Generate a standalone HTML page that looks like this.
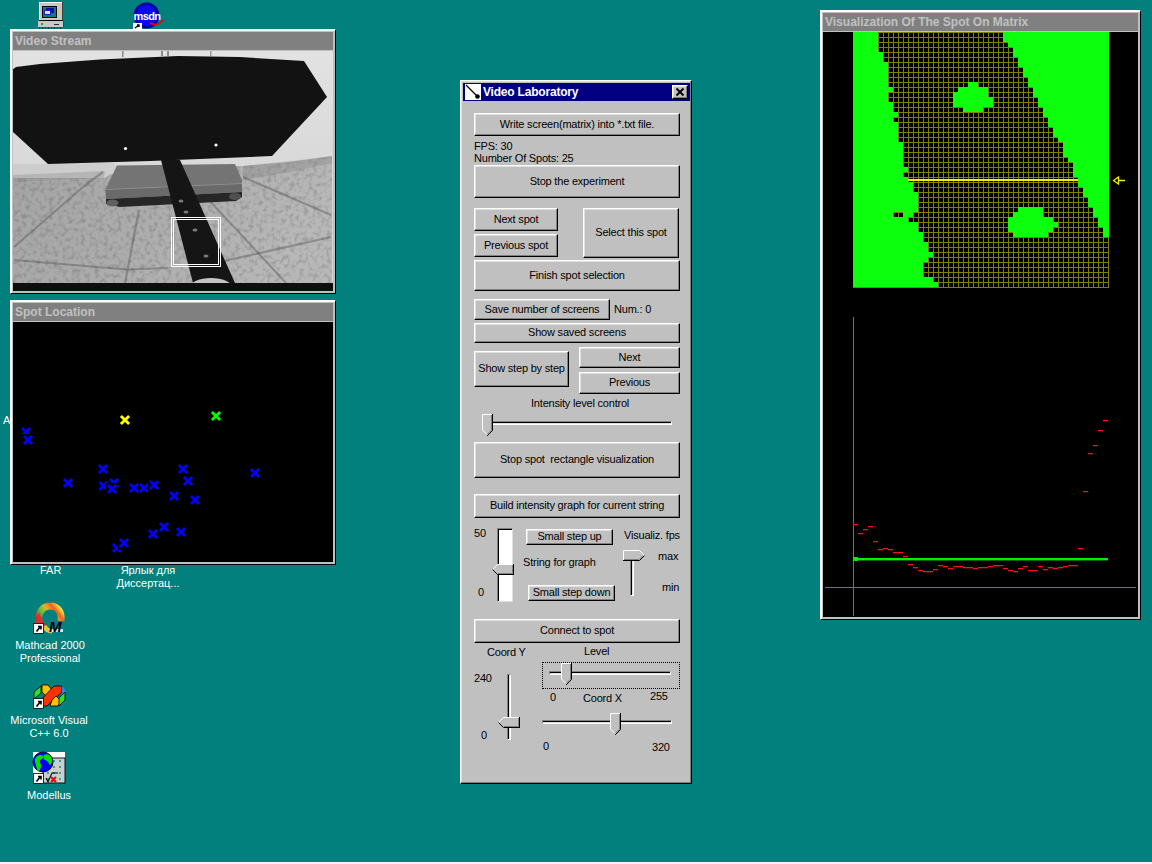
<!DOCTYPE html>
<html><head><meta charset="utf-8">
<style>
*{box-sizing:border-box;margin:0;padding:0}
html,body{width:1152px;height:864px;overflow:hidden}
body{background:#01807d;position:relative;font-family:"Liberation Sans",sans-serif;font-size:11px;color:#000}
.a{position:absolute}
.win{position:absolute;background:#c0c0c0;border-top:1px solid #fff;border-left:1px solid #fff;border-right:1px solid #000;border-bottom:1px solid #000;box-shadow:inset 1px 1px 0 #fff}
.tt{position:absolute;left:2px;top:2px;height:18px;background:#808080;color:#c0c0c0;font-weight:bold;font-size:12px;line-height:18px;padding-left:2px;white-space:nowrap;overflow:hidden}
.ct{position:absolute;left:2px;top:21px;background:#000;overflow:hidden}
.btn{position:absolute;letter-spacing:-0.2px;background:#c0c0c0;border-top:1px solid #fff;border-left:1px solid #fff;border-right:1px solid #000;border-bottom:1px solid #000;box-shadow:inset -1px -1px 0 #808080, inset 1px 1px 0 #dfdfdf;text-align:center;white-space:nowrap;display:flex;align-items:center;justify-content:center;padding-bottom:2px}
.t{position:absolute;white-space:nowrap;line-height:13px;letter-spacing:-0.2px}
.lbl{position:absolute;color:#fff;white-space:nowrap;text-align:center;line-height:13px;font-size:11px}
</style></head><body>
<!-- desktop icons -->
<svg class="a" style="left:36px;top:0px" width="32" height="29"><rect x="3" y="2" width="23" height="19" fill="#c8c8c8"/><path d="M3.5 21V2.5H26" stroke="#fff" fill="none"/><path d="M26.5 2V21" stroke="#404040" fill="none"/><rect x="6" y="6" width="15" height="12" fill="#000"/><rect x="7" y="7" width="13" height="10" fill="#008080"/><rect x="10" y="8" width="8" height="5" fill="#1010a0"/><rect x="8" y="10" width="7" height="5" fill="#2020c0"/><rect x="9" y="11" width="5" height="3" fill="#e0e0f0"/><rect x="3" y="20" width="24" height="1" fill="#000"/><rect x="2" y="21" width="26" height="6" fill="#c8c8c8"/><rect x="27" y="21" width="1" height="6" fill="#404040"/><rect x="5" y="23" width="2" height="2" fill="#00c000"/><rect x="18" y="24" width="5" height="1" fill="#303030"/><path d="M3 28H27" stroke="#000" stroke-dasharray="1 2" /></svg>
<svg class="a" style="left:130px;top:0px" width="36" height="29"><circle cx="16.5" cy="15.5" r="13" fill="#0000a0"/><circle cx="16.5" cy="15.5" r="10.5" fill="#0a0af0"/><text x="3.5" y="20" font-family="Liberation Sans" font-weight="bold" font-size="11" fill="#fff" letter-spacing="-0.6">msdn</text><path d="M20 23C25 26 30 24 33 20" stroke="#f00000" stroke-width="2" fill="none"/><rect x="3" y="23" width="9" height="7" fill="#fff"/><path d="M5 28L9 25M7 25H9V27" stroke="#000" stroke-width="1.3" fill="none"/></svg>
<svg class="a" style="left:32px;top:601px" width="34" height="34"><defs><linearGradient id="mg" x1="0" y1="0.8" x2="1" y2="0.2"><stop offset="0" stop-color="#d82828"/><stop offset="0.3" stop-color="#60c040"/><stop offset="0.55" stop-color="#e8b030"/><stop offset="0.8" stop-color="#f06020"/><stop offset="1" stop-color="#f0e040"/></linearGradient></defs><path d="M7 22C5 12 11 5 18 5C26 5 30 11 29 20" stroke="url(#mg)" stroke-width="7" fill="none"/><path d="M3 24L7 12L12 22L16 28Z" fill="#d83030"/><path d="M12 25C14 29 17 30 20 30" stroke="#f0c030" stroke-width="5" fill="none"/><rect x="18" y="28" width="13" height="3" fill="#e8e0e8"/><text x="17" y="31" font-family="Liberation Sans" font-weight="bold" font-style="italic" font-size="15" fill="#000">M</text><rect x="1.5" y="22.5" width="10" height="10" fill="#fff" stroke="#000" stroke-width="0.8"/><path d="M4.5 30.5L8.5 25.5M6.0 25.5H9.0V28.5" stroke="#000" stroke-width="1.6" fill="none"/></svg>
<svg class="a" style="left:32px;top:682px" width="34" height="28"><polygon points="2,10 9,4 9,11 2,17" fill="#30e030" stroke="#000" stroke-width="0.8"/><polygon points="10,3 16,3 20,8 14,14 10,10" fill="#ffc000" stroke="#000" stroke-width="0.8"/><polygon points="7,20 22,4 30,4 30,10 15,24 8,24" fill="#ff3000" stroke="#000" stroke-width="0.8"/><polygon points="30,4 34,9 30,13" fill="#3080ff"/><polygon points="24,14 29,19 26,24 18,24 20,18" fill="#ffc000" stroke="#000" stroke-width="0.8"/><polygon points="33,10 33,18 27,24 27,16" fill="#30e030" stroke="#000" stroke-width="0.8"/><polygon points="1,17 5,16 8,20 1,20" fill="#3080ff"/><rect x="1.5" y="16.5" width="10" height="10" fill="#fff" stroke="#000" stroke-width="0.8"/><path d="M4.5 24.5L8.5 19.5M6.0 19.5H9.0V22.5" stroke="#000" stroke-width="1.6" fill="none"/></svg>
<svg class="a" style="left:32px;top:751px" width="34" height="34"><defs><pattern id="dots" width="6" height="6" patternUnits="userSpaceOnUse" x="1" y="1"><circle cx="3" cy="3" r="0.9" fill="#008080"/></pattern></defs><rect x="1" y="1" width="32" height="31" fill="#fff"/><rect x="11" y="7" width="22" height="25" fill="#c8d0d0" stroke="#000" stroke-width="0.9"/><rect x="12" y="8" width="20" height="23" fill="url(#dots)"/><circle cx="11" cy="11" r="10" fill="#0000ff" stroke="#000" stroke-width="0.9"/><path d="M3 8C5 4 9 3 11 5C12 7 9 8 8 10C7 12 10 13 9 16C8 19 7 21 6 20C4 17 4 13 3 11Z" fill="#00e000"/><path d="M12 4C15 2 19 4 20 8C21 12 18 15 17 13C16 10 15 10 13 9C11 8 11 6 12 4Z" fill="#00e000"/><path d="M14 27L16 31L20 22H26" stroke="#000" stroke-width="1.1" fill="none"/><path d="M19 26L24 31M24 26L19 31" stroke="#f00000" stroke-width="1.9"/><rect x="1.5" y="22.5" width="10" height="10" fill="#fff" stroke="#000" stroke-width="0.8"/><path d="M4.5 30.5L8.5 25.5M6.0 25.5H9.0V28.5" stroke="#000" stroke-width="1.6" fill="none"/></svg>
<div class="lbl" style="left:40px;top:564px;text-align:left">FAR</div>
<div class="lbl" style="left:98px;top:564px;width:100px">Ярлык для<br>Диссертац...</div>
<div class="lbl" style="left:0px;top:639px;width:100px">Mathcad 2000<br>Professional</div>
<div class="lbl" style="left:-1px;top:714px;width:100px">Microsoft Visual<br>C++ 6.0</div>
<div class="lbl" style="left:-1px;top:789px;width:100px">Modellus</div>
<div class="lbl" style="left:3px;top:414px;text-align:left">A</div>
<!-- Video Stream -->
<div class="win" style="left:10px;top:29px;width:326px;height:265px">
 <div class="tt" style="width:320px">Video Stream</div>
 <div class="ct" style="width:320px;height:240px"><svg width="320" height="240" style="position:absolute;left:0;top:0"><defs><linearGradient id="wall" x1="0" y1="0" x2="0" y2="1"><stop offset="0" stop-color="#e2e2e2"/><stop offset="1" stop-color="#cfcfcf"/></linearGradient><linearGradient id="floor" x1="0" y1="0" x2="1" y2="0.3"><stop offset="0" stop-color="#a4a4a4"/><stop offset="0.5" stop-color="#acacac"/><stop offset="1" stop-color="#b8b8b8"/></linearGradient><filter id="mot" x="0" y="0" width="1" height="1"><feTurbulence type="fractalNoise" baseFrequency="0.22" numOctaves="2" seed="7"/><feColorMatrix type="matrix" values="0 0 0 0 0  0 0 0 0 0  0 0 0 0 0  0 0 0 -2.0 1.1"/><feComposite in2="SourceGraphic" operator="in"/></filter></defs><rect x="0" y="0" width="320" height="240" fill="url(#wall)"/><polygon points="-1.0,121.0 92.0,124.0 137.0,117.0 230.0,115.0 277.0,111.0 319.0,105.0 319.0,232.0 -1.0,232.0" fill="url(#floor)"/><polygon points="-1.0,121.0 92.0,124.0 137.0,117.0 230.0,115.0 277.0,111.0 319.0,105.0 319.0,232.0 -1.0,232.0" fill="#000" opacity="0.2" filter="url(#mot)"/><polygon points="-1.0,113.0 35.0,113.0 97.0,112.0 107.0,115.0 92.0,127.0 -1.0,127.0" fill="#cdcdcd"/><polygon points="-1.0,124.0 47.0,122.0 92.0,120.0 91.0,127.0 47.0,129.0 -1.0,131.0" fill="#8a8a8a" opacity="0.35"/><polygon points="230.0,115.0 287.0,109.0 319.0,105.0 319.0,112.0 277.0,121.0 230.0,129.0" fill="#7c7c7c" opacity="0.3"/><line x1="1" y1="196" x2="70" y2="136" stroke="#5a5a5a" stroke-width="2.2" opacity="0.45"/><line x1="70" y1="136" x2="90" y2="121" stroke="#5a5a5a" stroke-width="2.2" opacity="0.45"/><line x1="1" y1="209" x2="114" y2="218.5" stroke="#5a5a5a" stroke-width="2.2" opacity="0.45"/><line x1="114" y1="218.5" x2="155" y2="217" stroke="#5a5a5a" stroke-width="2.2" opacity="0.45"/><line x1="126" y1="159" x2="112" y2="232" stroke="#5a5a5a" stroke-width="2.2" opacity="0.45"/><line x1="194" y1="147" x2="273" y2="232" stroke="#5a5a5a" stroke-width="2.2" opacity="0.45"/><line x1="211" y1="210" x2="318" y2="186" stroke="#5a5a5a" stroke-width="2.2" opacity="0.45"/><line x1="230" y1="126" x2="318" y2="164" stroke="#5a5a5a" stroke-width="2.2" opacity="0.45"/><polygon points="-1.0,19.0 3.0,16.0 27.0,13.0 87.0,8.5 165.0,5.0 227.0,6.0 291.0,10.0 314.0,46.0 259.0,105.0 137.0,110.0 35.0,113.0 -1.0,80.0" fill="#121212"/><rect x="109" y="0" width="1.5" height="6" fill="#888"/><rect x="148" y="0" width="2" height="5" fill="#8a8a8a"/><rect x="154" y="0" width="2" height="5" fill="#8a8a8a"/><rect x="197" y="0" width="1.5" height="5" fill="#999"/><polygon points="93.0,144.0 229.0,138.0 229.0,146.0 223.0,150.0 107.0,156.0 93.0,153.0" fill="#262626"/><ellipse cx="99.5" cy="152" rx="6" ry="3.5" fill="#606060"/><ellipse cx="222" cy="145.5" rx="6" ry="3.5" fill="#505050"/><polygon points="104.0,114.5 222.0,113.0 229.0,129.0 229.0,141.0 93.0,148.0 92.6,138.0" fill="#747474"/><polygon points="92.6,138.0 229.0,132.0 229.0,141.0 93.0,148.0" fill="#6a6a6a"/><line x1="92.6" y1="138.5" x2="229" y2="132.5" stroke="#8e8e8e" stroke-width="1" opacity="1"/><polygon points="148.0,109.0 167.0,109.0 222.0,232.0 180.0,232.0" fill="#151515"/><ellipse cx="168" cy="150" rx="2.5" ry="1.5" fill="#7a7a7a"/><ellipse cx="173" cy="161" rx="2.5" ry="1.5" fill="#7a7a7a"/><ellipse cx="182" cy="179" rx="2.5" ry="1.5" fill="#7a7a7a"/><ellipse cx="193" cy="205" rx="2.5" ry="1.5" fill="#7a7a7a"/><ellipse cx="198" cy="236" rx="21" ry="9" fill="#c4c4c4"/><circle cx="112.5" cy="97.5" r="1.6" fill="#fff"/><circle cx="203" cy="94" r="1.6" fill="#fff"/><rect x="158.5" y="166.5" width="49" height="49" fill="none" stroke="#fff" stroke-width="1"/><rect x="160.5" y="168.5" width="45" height="45" fill="none" stroke="#fff" stroke-width="1"/><rect x="0" y="232" width="320" height="8" fill="#0e0e0e"/></svg></div>
</div>
<!-- Spot Location -->
<div class="win" style="left:10px;top:300px;width:326px;height:265px">
 <div class="tt" style="width:320px">Spot Location</div>
 <div class="ct" style="width:320px;height:240px"><svg width="320" height="240" style="position:absolute;left:0;top:0"><rect x="106" y="92" width="12" height="13" fill="#000"/><path d="M107.9 94L116.1 102M116.1 94L107.9 102" stroke="#ffff00" stroke-width="2.9"/><rect x="197" y="88" width="12" height="13" fill="#000"/><path d="M198.9 90L207.1 98M207.1 90L198.9 98" stroke="#00ff00" stroke-width="2.9"/><rect x="7" y="104" width="12" height="13" fill="#000"/><path d="M8.9 106L17.1 114M17.1 106L8.9 114" stroke="#0000ff" stroke-width="2.9"/><rect x="9" y="112" width="12" height="13" fill="#000"/><path d="M10.9 114L19.1 122M19.1 114L10.9 122" stroke="#0000ff" stroke-width="2.9"/><rect x="49" y="155" width="12" height="13" fill="#000"/><path d="M50.9 157L59.1 165M59.1 157L50.9 165" stroke="#0000ff" stroke-width="2.9"/><rect x="84" y="141" width="12" height="13" fill="#000"/><path d="M85.9 143L94.1 151M94.1 143L85.9 151" stroke="#0000ff" stroke-width="2.9"/><rect x="84.5" y="158" width="12" height="13" fill="#000"/><path d="M86.4 160L94.6 168M94.6 160L86.4 168" stroke="#0000ff" stroke-width="2.9"/><rect x="95" y="155" width="12" height="13" fill="#000"/><path d="M96.9 157L105.1 165M105.1 157L96.9 165" stroke="#0000ff" stroke-width="2.9"/><rect x="93" y="161" width="12" height="13" fill="#000"/><path d="M94.9 163L103.1 171M103.1 163L94.9 171" stroke="#0000ff" stroke-width="2.9"/><rect x="125" y="160" width="12" height="13" fill="#000"/><path d="M126.9 162L135.1 170M135.1 162L126.9 170" stroke="#0000ff" stroke-width="2.9"/><rect x="115" y="160" width="12" height="13" fill="#000"/><path d="M116.9 162L125.1 170M125.1 162L116.9 170" stroke="#0000ff" stroke-width="2.9"/><rect x="135" y="157" width="12" height="13" fill="#000"/><path d="M136.9 159L145.1 167M145.1 159L136.9 167" stroke="#0000ff" stroke-width="2.9"/><rect x="164" y="141" width="12" height="13" fill="#000"/><path d="M165.9 143L174.1 151M174.1 143L165.9 151" stroke="#0000ff" stroke-width="2.9"/><rect x="169" y="153" width="12" height="13" fill="#000"/><path d="M170.9 155L179.1 163M179.1 155L170.9 163" stroke="#0000ff" stroke-width="2.9"/><rect x="155" y="168" width="12" height="13" fill="#000"/><path d="M156.9 170L165.1 178M165.1 170L156.9 178" stroke="#0000ff" stroke-width="2.9"/><rect x="176" y="172" width="12" height="13" fill="#000"/><path d="M177.9 174L186.1 182M186.1 174L177.9 182" stroke="#0000ff" stroke-width="2.9"/><rect x="236" y="145" width="12" height="13" fill="#000"/><path d="M237.9 147L246.1 155M246.1 147L237.9 155" stroke="#0000ff" stroke-width="2.9"/><rect x="145" y="199" width="12" height="13" fill="#000"/><path d="M146.9 201L155.1 209M155.1 201L146.9 209" stroke="#0000ff" stroke-width="2.9"/><rect x="134" y="206" width="12" height="13" fill="#000"/><path d="M135.9 208L144.1 216M144.1 208L135.9 216" stroke="#0000ff" stroke-width="2.9"/><rect x="162" y="204" width="12" height="13" fill="#000"/><path d="M163.9 206L172.1 214M172.1 206L163.9 214" stroke="#0000ff" stroke-width="2.9"/><rect x="98" y="220" width="12" height="13" fill="#000"/><path d="M99.9 222L108.1 230M108.1 222L99.9 230" stroke="#0000ff" stroke-width="2.9"/><rect x="105" y="215" width="12" height="13" fill="#000"/><path d="M106.9 217L115.1 225M115.1 217L106.9 225" stroke="#0000ff" stroke-width="2.9"/></svg></div>
</div>
<!-- Visualization -->
<div class="win" style="left:820px;top:10px;width:321px;height:610px">
 <div class="tt" style="width:315px">Visualization Of The Spot On Matrix</div>
 <div class="ct" style="width:315px;height:585px"></div>
</div>
<svg style="position:absolute;left:853px;top:32px" width="256" height="256"><rect x="0" y="0" width="256" height="256" fill="#000"/><path d="M0.5 0V256 M0 0.5H256 M5.5 0V256 M0 5.5H256 M10.5 0V256 M0 10.5H256 M15.5 0V256 M0 15.5H256 M20.5 0V256 M0 20.5H256 M25.5 0V256 M0 25.5H256 M30.5 0V256 M0 30.5H256 M35.5 0V256 M0 35.5H256 M40.5 0V256 M0 40.5H256 M45.5 0V256 M0 45.5H256 M50.5 0V256 M0 50.5H256 M55.5 0V256 M0 55.5H256 M60.5 0V256 M0 60.5H256 M65.5 0V256 M0 65.5H256 M70.5 0V256 M0 70.5H256 M75.5 0V256 M0 75.5H256 M80.5 0V256 M0 80.5H256 M85.5 0V256 M0 85.5H256 M90.5 0V256 M0 90.5H256 M95.5 0V256 M0 95.5H256 M100.5 0V256 M0 100.5H256 M105.5 0V256 M0 105.5H256 M110.5 0V256 M0 110.5H256 M115.5 0V256 M0 115.5H256 M120.5 0V256 M0 120.5H256 M125.5 0V256 M0 125.5H256 M130.5 0V256 M0 130.5H256 M135.5 0V256 M0 135.5H256 M140.5 0V256 M0 140.5H256 M145.5 0V256 M0 145.5H256 M150.5 0V256 M0 150.5H256 M155.5 0V256 M0 155.5H256 M160.5 0V256 M0 160.5H256 M165.5 0V256 M0 165.5H256 M170.5 0V256 M0 170.5H256 M175.5 0V256 M0 175.5H256 M180.5 0V256 M0 180.5H256 M185.5 0V256 M0 185.5H256 M190.5 0V256 M0 190.5H256 M195.5 0V256 M0 195.5H256 M200.5 0V256 M0 200.5H256 M205.5 0V256 M0 205.5H256 M210.5 0V256 M0 210.5H256 M215.5 0V256 M0 215.5H256 M220.5 0V256 M0 220.5H256 M225.5 0V256 M0 225.5H256 M230.5 0V256 M0 230.5H256 M235.5 0V256 M0 235.5H256 M240.5 0V256 M0 240.5H256 M245.5 0V256 M0 245.5H256 M250.5 0V256 M0 250.5H256 M255.5 0V256 M0 255.5H256" stroke="#808000" stroke-width="1" fill="none"/><path d="M0 0h25v5h-25z M150 0h106v5h-106z M0 5h25v5h-25z M150 5h106v5h-106z M0 10h25v5h-25z M155 10h101v5h-101z M0 15h25v5h-25z M160 15h96v5h-96z M0 20h30v5h-30z M160 20h96v5h-96z M0 25h30v5h-30z M165 25h91v5h-91z M0 30h35v5h-35z M165 30h91v5h-91z M0 35h35v5h-35z M170 35h86v5h-86z M0 40h35v5h-35z M170 40h86v5h-86z M0 45h35v5h-35z M175 45h81v5h-81z M0 50h35v5h-35z M115 50h10v5h-10z M175 50h81v5h-81z M0 55h40v5h-40z M105 55h30v5h-30z M180 55h76v5h-76z M0 60h35v5h-35z M100 60h35v5h-35z M180 60h76v5h-76z M0 65h35v5h-35z M100 65h40v5h-40z M185 65h71v5h-71z M0 70h40v5h-40z M100 70h40v5h-40z M185 70h71v5h-71z M0 75h40v5h-40z M110 75h20v5h-20z M190 75h66v5h-66z M0 80h45v5h-45z M190 80h66v5h-66z M0 85h40v5h-40z M195 85h61v5h-61z M0 90h45v5h-45z M195 90h61v5h-61z M0 95h45v5h-45z M200 95h56v5h-56z M0 100h45v5h-45z M200 100h56v5h-56z M0 105h45v5h-45z M205 105h51v5h-51z M0 110h50v5h-50z M210 110h46v5h-46z M0 115h50v5h-50z M210 115h46v5h-46z M0 120h50v5h-50z M210 120h46v5h-46z M0 125h50v5h-50z M215 125h41v5h-41z M0 130h50v5h-50z M220 130h36v5h-36z M0 135h55v5h-55z M220 135h36v5h-36z M0 140h50v5h-50z M220 140h36v5h-36z M0 145h55v5h-55z M225 145h31v5h-31z M0 150h60v5h-60z M225 150h31v5h-31z M0 155h60v5h-60z M230 155h26v5h-26z M0 160h65v5h-65z M230 160h26v5h-26z M0 165h65v5h-65z M235 165h21v5h-21z M0 170h65v5h-65z M235 170h21v5h-21z M0 175h65v5h-65z M165 175h25v5h-25z M240 175h16v5h-16z M0 180h40v5h-40z M50 180h10v5h-10z M160 180h30v5h-30z M240 180h16v5h-16z M0 185h55v5h-55z M155 185h45v5h-45z M245 185h11v5h-11z M0 190h65v5h-65z M155 190h50v5h-50z M245 190h11v5h-11z M0 195h65v5h-65z M155 195h45v5h-45z M250 195h6v5h-6z M0 200h70v5h-70z M160 200h35v5h-35z M250 200h6v5h-6z M0 205h70v5h-70z M0 210h75v5h-75z M0 215h75v5h-75z M0 220h80v5h-80z M0 225h75v5h-75z M0 230h70v5h-70z M0 235h70v5h-70z M0 240h70v5h-70z M0 245h80v5h-80z M0 250h85v5h-85z" fill="#0cff0c"/><rect x="55" y="147" width="170" height="2" fill="#f0f000"/></svg>
<svg style="position:absolute;left:0;top:0" width="1152" height="864"><rect x="853" y="317" width="1" height="299" fill="#808000"/><rect x="825" y="587" width="311" height="1" fill="#808000"/><rect x="853" y="558" width="255" height="2.4" fill="#00f000"/><rect x="853" y="557" width="5" height="4" fill="#00f000"/><rect x="853" y="524" width="5" height="1.3" fill="#ff1010"/><rect x="858" y="533" width="5" height="1.3" fill="#ff1010"/><rect x="863" y="529" width="5" height="1.3" fill="#ff1010"/><rect x="868" y="526" width="5" height="1.3" fill="#ff1010"/><rect x="873" y="541" width="5" height="1.3" fill="#ff1010"/><rect x="878" y="549" width="5" height="1.3" fill="#ff1010"/><rect x="883" y="548" width="5" height="1.3" fill="#ff1010"/><rect x="888" y="549" width="5" height="1.3" fill="#ff1010"/><rect x="893" y="552" width="5" height="1.3" fill="#ff1010"/><rect x="898" y="552" width="5" height="1.3" fill="#ff1010"/><rect x="903" y="556" width="5" height="1.3" fill="#ff1010"/><rect x="908" y="564" width="5" height="1.3" fill="#ff1010"/><rect x="913" y="567" width="5" height="1.3" fill="#ff1010"/><rect x="918" y="570" width="5" height="1.3" fill="#ff1010"/><rect x="923" y="571" width="5" height="1.3" fill="#ff1010"/><rect x="928" y="571" width="5" height="1.3" fill="#ff1010"/><rect x="933" y="569" width="5" height="1.3" fill="#ff1010"/><rect x="938" y="565" width="5" height="1.3" fill="#ff1010"/><rect x="943" y="566" width="5" height="1.3" fill="#ff1010"/><rect x="948" y="568" width="5" height="1.3" fill="#ff1010"/><rect x="953" y="566" width="5" height="1.3" fill="#ff1010"/><rect x="958" y="566" width="5" height="1.3" fill="#ff1010"/><rect x="963" y="567" width="5" height="1.3" fill="#ff1010"/><rect x="968" y="567" width="5" height="1.3" fill="#ff1010"/><rect x="973" y="568" width="5" height="1.3" fill="#ff1010"/><rect x="978" y="567" width="5" height="1.3" fill="#ff1010"/><rect x="983" y="567" width="5" height="1.3" fill="#ff1010"/><rect x="988" y="566" width="5" height="1.3" fill="#ff1010"/><rect x="993" y="565" width="5" height="1.3" fill="#ff1010"/><rect x="998" y="565" width="5" height="1.3" fill="#ff1010"/><rect x="1003" y="568" width="5" height="1.3" fill="#ff1010"/><rect x="1008" y="570" width="5" height="1.3" fill="#ff1010"/><rect x="1013" y="571" width="5" height="1.3" fill="#ff1010"/><rect x="1018" y="568" width="5" height="1.3" fill="#ff1010"/><rect x="1023" y="566" width="5" height="1.3" fill="#ff1010"/><rect x="1028" y="570" width="5" height="1.3" fill="#ff1010"/><rect x="1033" y="570" width="5" height="1.3" fill="#ff1010"/><rect x="1038" y="566" width="5" height="1.3" fill="#ff1010"/><rect x="1043" y="569" width="5" height="1.3" fill="#ff1010"/><rect x="1048" y="567" width="5" height="1.3" fill="#ff1010"/><rect x="1053" y="568" width="5" height="1.3" fill="#ff1010"/><rect x="1058" y="567" width="5" height="1.3" fill="#ff1010"/><rect x="1063" y="566" width="5" height="1.3" fill="#ff1010"/><rect x="1068" y="565" width="5" height="1.3" fill="#ff1010"/><rect x="1073" y="565" width="5" height="1.3" fill="#ff1010"/><rect x="1078" y="548" width="5" height="1.3" fill="#ff1010"/><rect x="1083" y="491" width="5" height="1.3" fill="#ff1010"/><rect x="1088" y="453" width="5" height="1.3" fill="#ff1010"/><rect x="1093" y="445" width="5" height="1.3" fill="#ff1010"/><rect x="1098" y="430" width="5" height="1.3" fill="#ff1010"/><rect x="1103" y="420" width="5" height="1.3" fill="#ff1010"/><path d="M1113.5 180.5L1118.5 177V184Z M1118.5 180.5H1125" stroke="#f0f000" stroke-width="1.3" fill="none"/></svg>
<!-- Video Laboratory dialog -->
<div class="a" style="left:460px;top:80px;width:232px;height:704px;background:#c0c0c0;border-top:1px solid #fff;border-left:1px solid #fff;border-right:1px solid #000;border-bottom:1px solid #000;box-shadow:inset -1px -1px 0 #808080, inset 1px 1px 0 #dfdfdf"></div>
<div class="a" style="left:463px;top:83px;width:227px;height:18px;background:#000080"></div>
<svg class="a" style="left:465px;top:84px" width="16" height="16"><rect width="16" height="16" fill="#fff"/><path d="M1 1L13 13" stroke="#000" stroke-width="1.2"/><circle cx="12.5" cy="12.5" r="2.3" fill="#000"/></svg>
<div class="t" style="left:483px;top:84px;line-height:16px;color:#fff;font-weight:bold;font-size:12px">Video Laboratory</div>
<div class="btn" style="left:672px;top:85px;width:16px;height:14px"></div>
<svg class="a" style="left:672px;top:85px" width="16" height="14"><path d="M4.5 3.5L11.5 10.5M11.5 3.5L4.5 10.5" stroke="#000" stroke-width="1.8"/></svg>
<div class="btn" style="left:474px;top:113px;width:206px;height:23px">Write screen(matrix) into *.txt file.</div>
<div class="btn" style="left:474px;top:165px;width:206px;height:33px">Stop the experiment</div>
<div class="btn" style="left:474px;top:208px;width:84px;height:23px">Next spot</div>
<div class="btn" style="left:474px;top:234px;width:84px;height:23px">Previous spot</div>
<div class="btn" style="left:583px;top:208px;width:96px;height:50px">Select this spot</div>
<div class="btn" style="left:474px;top:260px;width:206px;height:31px">Finish spot selection</div>
<div class="btn" style="left:474px;top:299px;width:136px;height:21px">Save number of screens</div>
<div class="btn" style="left:474px;top:323px;width:206px;height:20px">Show saved screens</div>
<div class="btn" style="left:474px;top:351px;width:95px;height:36px">Show step by step</div>
<div class="btn" style="left:579px;top:347px;width:101px;height:21px">Next</div>
<div class="btn" style="left:579px;top:372px;width:101px;height:22px">Previous</div>
<div class="btn" style="left:474px;top:442px;width:206px;height:36px">Stop spot&nbsp; rectangle visualization</div>
<div class="btn" style="left:474px;top:494px;width:206px;height:24px">Build intensity graph for current string</div>
<div class="btn" style="left:526px;top:529px;width:87px;height:16px">Small step up</div>
<div class="btn" style="left:528px;top:585px;width:87px;height:16px">Small step down</div>
<div class="btn" style="left:474px;top:619px;width:206px;height:24px">Connect to spot</div>
<div class="t" style="left:474px;top:140px">FPS: 30</div>
<div class="t" style="left:474px;top:152px">Number Of Spots: 25</div>
<div class="t" style="left:614px;top:303px">Num.: 0</div>
<div class="t" style="left:531px;top:397px">Intensity level control</div>
<div class="t" style="left:474px;top:527px">50</div>
<div class="t" style="left:478px;top:586px">0</div>
<div class="t" style="left:523px;top:556px">String for graph</div>
<div class="t" style="left:624px;top:529px">Visualiz. fps</div>
<div class="t" style="left:658px;top:550px">max</div>
<div class="t" style="left:662px;top:581px">min</div>
<div class="t" style="left:487px;top:646px">Coord Y</div>
<div class="t" style="left:584px;top:645px">Level</div>
<div class="t" style="left:550px;top:691px">0</div>
<div class="t" style="left:650px;top:690px">255</div>
<div class="t" style="left:583px;top:692px">Coord X</div>
<div class="t" style="left:474px;top:672px">240</div>
<div class="t" style="left:481px;top:729px">0</div>
<div class="t" style="left:543px;top:740px">0</div>
<div class="t" style="left:652px;top:741px">320</div>
<div class="a" style="left:482px;top:421px;width:190px;height:4px;border-top:1px solid #808080;border-left:1px solid #808080;border-bottom:1px solid #fff;border-right:1px solid #fff;background:#000;box-shadow:inset 0 -1px 0 #dfdfdf"></div>
<svg class="a" style="left:482px;top:414px" width="11" height="22"><path d="M0 0H10V16L5 21L0 16Z" fill="#c0c0c0"/><path d="M0.5 16V0.5H10" stroke="#fff" fill="none"/><path d="M0.5 16L5.5 21" stroke="#fff" fill="none"/><path d="M10.5 0V16.5L5 22" stroke="#000" fill="none"/><path d="M9.5 1V16L5 20.5" stroke="#808080" fill="none"/></svg>
<div class="a" style="left:497px;top:528px;width:16px;height:74px;background:#fff;border-top:1px solid #808080;border-left:1px solid #808080;border-right:1px solid #dfdfdf;border-bottom:1px solid #dfdfdf;box-shadow:inset 1px 1px 0 #000"></div>
<svg class="a" style="left:492px;top:564px" width="23" height="12"><path d="M5.5 0H22V11H5.5L0 5.5Z" fill="#c0c0c0"/><path d="M21 0.5H5.5L0.5 5.5" stroke="#fff" fill="none"/><path d="M0.5 5.5L5.5 10.5H22M21.5 0V11" stroke="#000" fill="none"/><path d="M20.5 1V9.5H6" stroke="#808080" fill="none"/></svg>
<div class="a" style="left:630px;top:551px;width:4px;height:45px;border-top:1px solid #808080;border-left:1px solid #808080;border-bottom:1px solid #fff;border-right:1px solid #fff;background:#000;box-shadow:inset -1px 0 0 #dfdfdf"></div>
<svg class="a" style="left:623px;top:550px" width="23" height="12"><path d="M0 0H16.5L22 5.5L16.5 11H0Z" fill="#c0c0c0"/><path d="M0.5 10V0.5H16.5L21.5 5.5" stroke="#fff" fill="none"/><path d="M21.5 5.5L16.5 10.5H0" stroke="#000" fill="none"/><path d="M1 9.5H16L19.5 6" stroke="#808080" fill="none"/></svg>
<div class="a" style="left:542px;top:662px;width:138px;height:27px;border:1px dotted #000"></div>
<div class="a" style="left:549px;top:671px;width:122px;height:4px;border-top:1px solid #808080;border-left:1px solid #808080;border-bottom:1px solid #fff;border-right:1px solid #fff;background:#000;box-shadow:inset 0 -1px 0 #dfdfdf"></div>
<svg class="a" style="left:561px;top:663px" width="11" height="22"><path d="M0 0H10V16L5 21L0 16Z" fill="#c0c0c0"/><path d="M0.5 16V0.5H10" stroke="#fff" fill="none"/><path d="M0.5 16L5.5 21" stroke="#fff" fill="none"/><path d="M10.5 0V16.5L5 22" stroke="#000" fill="none"/><path d="M9.5 1V16L5 20.5" stroke="#808080" fill="none"/></svg>
<div class="a" style="left:507px;top:674px;width:4px;height:66px;border-top:1px solid #808080;border-left:1px solid #808080;border-bottom:1px solid #fff;border-right:1px solid #fff;background:#000;box-shadow:inset -1px 0 0 #dfdfdf"></div>
<svg class="a" style="left:498px;top:717px" width="23" height="12"><path d="M5.5 0H22V11H5.5L0 5.5Z" fill="#c0c0c0"/><path d="M21 0.5H5.5L0.5 5.5" stroke="#fff" fill="none"/><path d="M0.5 5.5L5.5 10.5H22M21.5 0V11" stroke="#000" fill="none"/><path d="M20.5 1V9.5H6" stroke="#808080" fill="none"/></svg>
<div class="a" style="left:542px;top:720px;width:130px;height:4px;border-top:1px solid #808080;border-left:1px solid #808080;border-bottom:1px solid #fff;border-right:1px solid #fff;background:#000;box-shadow:inset 0 -1px 0 #dfdfdf"></div>
<svg class="a" style="left:610px;top:713px" width="11" height="22"><path d="M0 0H10V16L5 21L0 16Z" fill="#c0c0c0"/><path d="M0.5 16V0.5H10" stroke="#fff" fill="none"/><path d="M0.5 16L5.5 21" stroke="#fff" fill="none"/><path d="M10.5 0V16.5L5 22" stroke="#000" fill="none"/><path d="M9.5 1V16L5 20.5" stroke="#808080" fill="none"/></svg>
<div class="a" style="left:0;top:862px;width:1152px;height:2px;background:#f4f0f4"></div>
</body></html>
